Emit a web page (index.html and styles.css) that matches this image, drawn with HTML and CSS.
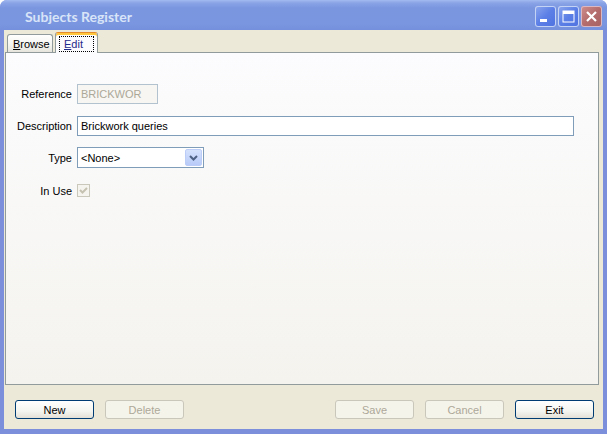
FILE: index.html
```html
<!DOCTYPE html>
<html>
  <head>
    <meta charset="utf-8">
    <title>Subjects Register</title>
    <link rel="stylesheet" href="styles.css">
  </head>
  <body>
    <div class="window">
      <div class="titlebar">
        <span class="title">Subjects Register</span>
        <div class="caption">
          <span class="cbtn min"><svg width="21" height="21" viewBox="0 0 21 21"><rect x="5" y="13" width="7" height="3" fill="#fff"/></svg></span>
          <span class="cbtn max"><svg width="21" height="21" viewBox="0 0 21 21"><rect x="5" y="5" width="11" height="11" fill="none" stroke="#fff" stroke-width="1"/><rect x="5" y="5" width="11" height="3" fill="#fff"/></svg></span>
          <span class="cbtn close"><svg width="21" height="21" viewBox="0 0 21 21"><path d="M6 6 L15 15 M15 6 L6 15" stroke="#fff" stroke-width="2.2"/></svg></span>
        </div>
      </div>
      <div class="client">
        <div class="tabs">
          <span class="tab"><u>B</u>rowse</span>
          <span class="tab active"><span class="focus"><u>E</u>dit</span></span>
        </div>
        <div class="page">
          <div class="field first">
            <label>Reference</label>
            <input class="txt ref" type="text" value="BRICKWOR" disabled>
          </div>
          <div class="field second">
            <label>Description</label>
            <input class="txt desc" type="text" value="Brickwork queries">
          </div>
          <div class="field third">
            <label>Type</label>
            <div class="combo">
              <span class="combo-text">&lt;None&gt;</span>
              <span class="combo-btn"><svg width="17" height="17" viewBox="0 0 17 17"><path d="M5 7 L8.5 10.5 L12 7" fill="none" stroke="#4d6185" stroke-width="2"/></svg></span>
            </div>
          </div>
          <div class="field fourth">
            <label>In Use</label>
            <span class="check"><svg width="11" height="11" viewBox="0 0 11 11"><path d="M2 5 L4.5 7.5 L9 3" fill="none" stroke="#c5c2b2" stroke-width="2"/></svg></span>
          </div>
        </div>
        <div class="buttons">
          <button class="btn">New</button>
          <button class="btn" disabled>Delete</button>
          <button class="btn push" disabled>Save</button>
          <button class="btn" disabled>Cancel</button>
          <button class="btn">Exit</button>
        </div>
      </div>
    </div>
  </body>
</html>
```

FILE: styles.css
```css
body {
  margin: 0;
  font-family: "Liberation Sans", Arial, sans-serif;
  font-size: 11px;
  color: #000;
  background: #fff;
}

.window {
  width: 607px;
  height: 434px;
  display: flex;
  flex-direction: column;
  background: #7b8fdb;
  border-radius: 7px 7px 0 0;
  overflow: hidden;
}

.titlebar {
  height: 30px;
  flex: none;
  display: flex;
  align-items: center;
  padding: 0 5px 0 25px;
  background: linear-gradient(#a3bbf0 0px, #89a3e6 3px, #7a96df 8px, #7b96e0 24px, #7590dc 30px);
}

.title {
  font-family: Lato, "Liberation Sans", sans-serif;
  font-weight: bold;
  font-size: 14px;
  color: #d8e4f8;
  padding-top: 3px;
}

.caption {
  margin-left: auto;
  display: flex;
  gap: 2px;
  padding-top: 2px;
}

.cbtn {
  width: 21px;
  height: 21px;
  box-sizing: border-box;
  border-radius: 3px;
  display: block;
  overflow: hidden;
  box-shadow: inset 0 0 0 1px #c4d2f4;
}

.cbtn svg {
  display: block;
}

.min, .max {
  background: linear-gradient(135deg, #8ea8ee, #5b7fe6 50%, #4f72e0);
}

.close {
  background: linear-gradient(135deg, #cf8e8c, #b46c6c 50%, #a86262);
  box-shadow: inset 0 0 0 1px #d9b8c4;
}

.client {
  flex: 1;
  display: flex;
  flex-direction: column;
  background: #ece9d8;
  margin: 0 4px 5px 4px;
  padding: 0 4px 10px 1px;
}

.tabs {
  height: 22px;
  display: flex;
  align-items: flex-end;
  padding-left: 2px;
  position: relative;
  z-index: 1;
}

.tab {
  box-sizing: border-box;
  height: 18px;
  width: 46px;
  border: 1px solid #919b9c;
  border-bottom: none;
  border-radius: 3px 3px 0 0;
  background: linear-gradient(#ffffff, #f3f3ef 60%, #e6e4dc);
  padding: 3px 0 0 5px;
}

.tab.active {
  width: 43px;
  height: 21px;
  margin-left: 2px;
  margin-bottom: -1px;
  padding: 3px 0 0 3px;
  background: #fcfcfe;
  border-top-color: #e68b2c;
  box-shadow: inset 0 2px 0 #ffc73c;
  color: #1f2a8a;
}

.focus {
  display: inline-block;
  width: 35px;
  height: 16px;
  box-sizing: border-box;
  border: 1px dotted #000;
  padding: 1px 0 0 4px;
}

.page {
  flex: 1;
  border: 1px solid #919b9c;
  background: linear-gradient(#fcfcfe, #f4f3ee);
  padding-top: 31px;
}

.field {
  display: flex;
  align-items: center;
}

.field label {
  width: 66px;
  margin-right: 5px;
  text-align: right;
}

.second {
  margin-top: 12px;
}

.third {
  margin-top: 11px;
}

.fourth {
  margin-top: 16px;
}

.txt {
  box-sizing: border-box;
  height: 20px;
  margin: 0;
  padding: 0 3px;
  font: inherit;
  border: 1px solid #7f9db9;
  background: #fff;
  color: #000;
  outline: none;
}

.ref {
  width: 81px;
  border-color: #b3c2cf;
  background: #f7f6f2;
  color: #aca899;
}

.desc {
  width: 497px;
}

.combo {
  box-sizing: border-box;
  width: 127px;
  height: 21px;
  border: 1px solid #7f9db9;
  background: #fff;
  display: flex;
  align-items: center;
  padding: 1px;
}

.combo-text {
  flex: 1;
  padding-left: 2px;
}

.combo-btn {
  width: 17px;
  height: 17px;
  box-sizing: border-box;
  border: 1px solid #bccdf7;
  border-radius: 2px;
  background: linear-gradient(#d5e1fd, #b8cbf8);
}

.combo-btn svg {
  display: block;
  margin: -1px;
}

.check {
  width: 13px;
  height: 13px;
  box-sizing: border-box;
  border: 1px solid #cac8bb;
  background: #f5f4ee;
  display: block;
}

.check svg {
  display: block;
}

.buttons {
  display: flex;
  gap: 11px;
  margin: 15px 5px 0 10px;
}

.btn {
  width: 79px;
  height: 19px;
  box-sizing: border-box;
  padding: 0;
  font: inherit;
  color: #000;
  border: 1px solid #003c74;
  border-radius: 3px;
  background: linear-gradient(#ffffff, #f4f4f0 60%, #e3e0d6);
}

.btn:disabled {
  color: #aca899;
  border-color: #c9c7ba;
  background: #f5f4ea;
}

.push {
  margin-left: auto;
}
```
